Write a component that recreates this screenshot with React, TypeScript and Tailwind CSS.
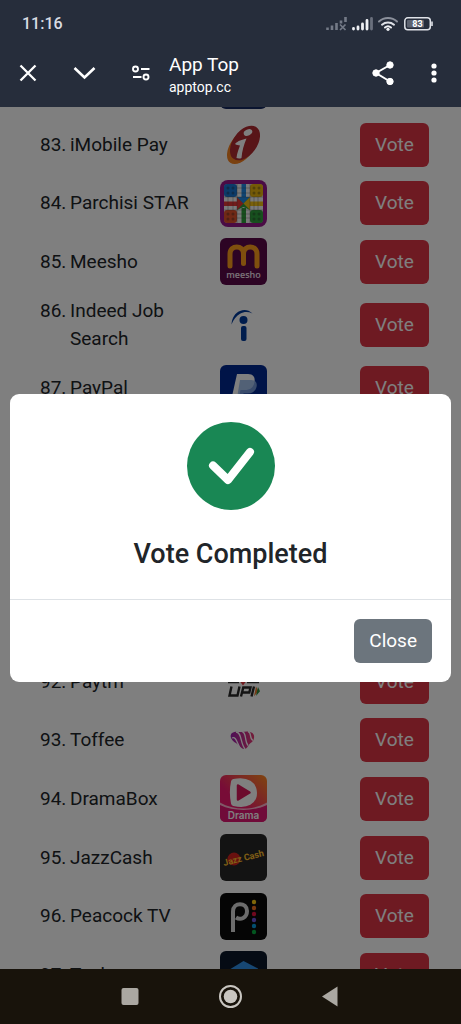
import React from 'react';

const UpiLogo = () => (
  <svg viewBox="0 0 47 47" className="size-[47px]">
    <path d="M8 24.500h11M27 24.500h12" stroke="#333" strokeWidth="1.500" />
    <path d="M20 23.500h6l-3 4z" fill="#e0343c" />
    <path
      d="M11.500 28.500l-2 9h8l2-9M21 38.500l2.300-9h7.200l-1.200 5h-7.300M34 28.500l-2.500 10"
      fill="none"
      stroke="#282828"
      strokeWidth="2.400"
    />
    <path d="M36 28.500l2.500 4.800-4.500 5z" fill="#e8762c" />
    <path d="M38 29l2 4.300-4 4.700z" fill="#2b8a3e" />
  </svg>
);

const IMobileLogo = () => (
  <svg viewBox="0 0 47 47" className="size-[47px]">
    <ellipse cx="22" cy="25.500" rx="11.500" ry="20" transform="rotate(36 22 25.500)" fill="#f58220" />
    <ellipse cx="25" cy="22" rx="12" ry="19.500" transform="rotate(36 25 22)" fill="#b02a30" />
    <path d="M15 23c3-3.500 7-4 11.500-5.500-2.500 6-4.500 12-5 19.500-2 .8-3.500.5-5 0 .5-5 2-8.500 3.500-12.500-1.800-.3-3.300-.3-5-1.500z" fill="#fff" />
    <ellipse cx="28" cy="11.500" rx="4.500" ry="3" transform="rotate(-25 28 11.500)" fill="#fff" />
  </svg>
);

const ParchisiLogo = () => (
  <svg viewBox="0 0 47 47" className="size-[47px]">
    <rect width="47" height="47" rx="8" fill="#94188a" />
    <rect x="4" y="4" width="39" height="39" rx="4" fill="#f4f4f4" />
    <rect x="4" y="4" width="13" height="13" rx="3" fill="#1976d2" />
    <rect x="30" y="4" width="13" height="13" rx="3" fill="#e8b50f" />
    <rect x="4" y="30" width="13" height="13" rx="3" fill="#e0522d" />
    <rect x="30" y="30" width="13" height="13" rx="3" fill="#2e9e3c" />
    <path d="M21.500 4h4.500v15h-4.500z" fill="#1e88e5" />
    <path d="M21.500 28h4.500v15h-4.500z" fill="#2e9e3c" />
    <path d="M4 21.500h15v4.500H4z" fill="#e53935" />
    <path d="M28 21.500h15v4.500H28z" fill="#f2c014" />
    <path d="M17 17l6.500 3 6.500-3-3 6.500 3 6.500-6.500-3-6.500 3 3-6.500z" fill="#2e9e3c" />
    <path d="M17 17l6.500 6.500L17 30z" fill="#e53935" />
    <path d="M17 17l6.500 6.500L30 17z" fill="#1e88e5" />
    <path d="M30 17l-6.500 6.500L30 30z" fill="#f2c014" />
    <path
      d="M17 4v39M30 4v39M4 17h39M4 30h39M17 8h13M17 13h13M17 34h13M17 38h13M8 17v13M13 17v13M34 17v13M38 17v13"
      stroke="#444"
      strokeOpacity=".5"
      strokeWidth=".7"
    />
    <g fill="#222" fillOpacity=".35">
      <circle cx="8" cy="8" r="1.500" />
      <circle cx="13" cy="8" r="1.500" />
      <circle cx="8" cy="13" r="1.500" />
      <circle cx="13" cy="13" r="1.500" />
      <circle cx="34" cy="8" r="1.500" />
      <circle cx="39" cy="8" r="1.500" />
      <circle cx="34" cy="13" r="1.500" />
      <circle cx="39" cy="13" r="1.500" />
      <circle cx="8" cy="34" r="1.500" />
      <circle cx="13" cy="34" r="1.500" />
      <circle cx="8" cy="39" r="1.500" />
      <circle cx="13" cy="39" r="1.500" />
      <circle cx="34" cy="34" r="1.500" />
      <circle cx="39" cy="34" r="1.500" />
      <circle cx="34" cy="39" r="1.500" />
      <circle cx="39" cy="39" r="1.500" />
    </g>
  </svg>
);

const MeeshoLogo = () => (
  <svg viewBox="0 0 47 47" className="size-[47px]">
    <rect width="47" height="47" rx="6" fill="#5a0848" />
    <path
      d="M10 28V16c0-9.500 13.500-9.500 13.500 0v9.500M23.500 16c0-9.500 13.500-9.500 13.500 0v12"
      fill="none"
      stroke="#ff9f1c"
      strokeWidth="5"
      strokeLinecap="round"
    />
    <text x="23.500" y="40" textAnchor="middle" fontSize="9" fontWeight="600" fill="#f5e6f1" fontFamily="Open Sans, sans-serif">
      meesho
    </text>
  </svg>
);

const IndeedLogo = () => (
  <svg viewBox="0 0 47 47" className="size-[47px]">
    <path d="M11.500 22.500c.5-7 3.500-11.500 8.500-13.500 4.500-1.800 8.500-1 12.500 2.500-4.500-2-8.500-1.800-12.500.2-4 2.300-6.500 5.800-8.500 10.800z" fill="#003a9b" />
    <circle cx="23.500" cy="18" r="4" fill="#003a9b" />
    <rect x="21" y="24" width="5.500" height="15" rx="2" fill="#003a9b" />
  </svg>
);

const PaypalLogo = () => (
  <svg viewBox="0 0 47 47" className="size-[47px]">
    <rect width="47" height="47" rx="6" fill="#002991" />
    <path d="M17 9h11c5 0 7.500 3 6.500 8-1 5.500-4 8-10 8h-4l-3 13h-7z" fill="#fff" />
    <path d="M20 15h11c4.500 0 6.500 3 5.500 7s-4 6.500-9 6.500h-4L22 39h-6z" fill="#8fb3e8" fillOpacity=".8" />
  </svg>
);

const ToffeeLogo = () => (
  <svg viewBox="0 0 47 47" className="size-[47px]">
    <defs>
      <linearGradient id="toffee" x1="0" x2="1">
        <stop stopColor="#9b1fae" />
        <stop offset="1" stopColor="#ea3a72" />
      </linearGradient>
    </defs>
    <path
      d="M12 16c3-2 6-1 9-1s6-1 9 0c4 1 5 4 3.500 8-1 2-2.500 2.500-4 4-1.500 1.700-2.500 5-5 5s-4-2-6-4c-3-2.500-6-3.500-7.500-7-.6-2-.5-4 1-5z"
      fill="url(#toffee)"
    />
    <path
      d="M12 21c4-2 5 5 8 10M16 15c6 0 4 11 9 17M22 14.500c5 1 2 9 6 14M28 14.500c4 1 1 7 5 9"
      fill="none"
      stroke="#fff"
      strokeWidth="1.300"
    />
  </svg>
);

const DramaLogo = () => (
  <svg viewBox="0 0 47 47" className="size-[47px]">
    <defs>
      <linearGradient id="drama" x1="0" y1="1" x2="1" y2="0">
        <stop offset=".4" stopColor="#f0196e" />
        <stop offset="1" stopColor="#ff8a1f" />
      </linearGradient>
    </defs>
    <rect width="47" height="47" rx="6" fill="url(#drama)" />
    <path d="M0 30c14 6 33 6 47 0v11q0 6-6 6H6q-6 0-6-6z" fill="#e01672" />
    <path d="M0 27.500c14 8 33 8 47 0v2.500c-14 6.500-33 6.500-47 0z" fill="#ffb3cf" />
    <path
      d="M14 7c13-3 20 3 20 11s-7 13-20 10c-1.500-7-1.500-14 0-21z"
      fill="#fff"
      stroke="#fff"
      strokeWidth="6"
      strokeLinejoin="round"
    />
    <path d="M18 10.500l11.500 7L18 24.500z" fill="#d8175b" stroke="#d8175b" strokeWidth="2.500" strokeLinejoin="round" />
    <text x="23.500" y="43.500" textAnchor="middle" fontSize="10" fontWeight="600" fill="#fff" fontFamily="Inter, sans-serif">
      Drama
    </text>
  </svg>
);

const JazzCashLogo = () => (
  <svg viewBox="0 0 47 47" className="size-[47px]">
    <rect width="47" height="47" rx="6" fill="#262626" />
    <circle cx="14" cy="25" r="6.500" fill="#d3231f" />
    <text
      x="23.500"
      y="27"
      textAnchor="middle"
      fontSize="9"
      fontWeight="700"
      fill="#ffbf2b"
      fontFamily="Roboto, sans-serif"
      transform="rotate(-14 23.500 24)"
    >
      Jazz Cash
    </text>
  </svg>
);

const PeacockLogo = () => {
  const feathers = ['#fccc12', '#f37021', '#e0103c', '#6e55dc', '#069de0', '#05ac3f'];
  return (
    <svg viewBox="0 0 47 47" className="size-[47px]">
      <rect width="47" height="47" rx="6" fill="#0a0a0a" />
      <path d="M13 39V18.500c0-10 14-9.500 14-.5 0 7-6.500 9.500-11 6.500" fill="none" stroke="#d8d8d8" strokeWidth="4" />
      {feathers.map((color, i) => (
        <circle key={color} cx="34" cy={9 + i * 6} r="2.200" fill={color} />
      ))}
    </svg>
  );
};

const TaskerLogo = () => (
  <svg viewBox="0 0 47 47" className="size-[47px]">
    <rect width="47" height="47" rx="6" fill="#0a1628" />
    <path d="M8 19.500L23.500 10 38 17.500v14L23.500 40 8 32z" fill="#2e8fe6" />
  </svg>
);

const BlueLogo = () => (
  <svg viewBox="0 0 47 47" className="size-[47px]">
    <rect width="47" height="47" rx="6" fill="#14285f" />
  </svg>
);

const apps = [
  { rank: 82, name: '', logo: BlueLogo },
  { rank: 83, name: 'iMobile Pay', logo: IMobileLogo },
  { rank: 84, name: 'Parchisi STAR', logo: ParchisiLogo },
  { rank: 85, name: 'Meesho', logo: MeeshoLogo },
  { rank: 86, name: 'Indeed Job Search', logo: IndeedLogo },
  { rank: 87, name: 'PayPal', logo: PaypalLogo },
  { rank: 88, name: '', logo: BlueLogo },
  { rank: 89, name: '', logo: BlueLogo },
  { rank: 90, name: '', logo: BlueLogo },
  { rank: 91, name: '', logo: BlueLogo },
  { rank: 92, name: 'Paytm', logo: UpiLogo },
  { rank: 93, name: 'Toffee', logo: ToffeeLogo },
  { rank: 94, name: 'DramaBox', logo: DramaLogo },
  { rank: 95, name: 'JazzCash', logo: JazzCashLogo },
  { rank: 96, name: 'Peacock TV', logo: PeacockLogo },
  { rank: 97, name: 'Tasker', logo: TaskerLogo }
];

function StatusIcons() {
  return (
    <svg viewBox="0 0 108 16" className="h-4 w-[108px]" aria-hidden="true">
      <g stroke="#747a87" strokeWidth="2.600">
        <path d="M2.500 14v-2.500M7 14v-4.500M11.500 14V7M16 7.500V4.500M20.500 6V1" />
        <path d="M15 8.500l5.500 5.500M20.500 8.500L15 14" strokeWidth="1.700" />
      </g>
      <g stroke="#eef0f4" strokeWidth="2.800" strokeLinecap="round">
        <path d="M28.500 13v-.5M33 13v-2M37.500 13V8M42 13V4.500" />
        <path d="M46.500 13V2.500" stroke="#6a707d" />
      </g>
      <g fill="none" strokeWidth="2" strokeLinecap="round">
        <path d="M54 5.500c5-4.700 13-4.700 18 0" stroke="#8b909b" />
        <path d="M57 8.700c3.500-3 8.500-3 12 0" stroke="#dfe2e8" />
        <path d="M60 11.500c1.800-1.500 4.200-1.500 6 0" stroke="#eef0f4" />
      </g>
      <circle cx="63" cy="13.300" r="1.600" fill="#eef0f4" />
      <rect x="79.800" y="1.800" width="25.500" height="12" rx="3" fill="none" stroke="#dfe2e8" strokeWidth="1.500" />
      <rect x="82" y="4" width="17" height="7.600" rx="1" fill="#5d6370" />
      <path d="M107 5.500v4.500" stroke="#dfe2e8" strokeWidth="1.600" />
      <text x="92.500" y="11" textAnchor="middle" fontSize="9" fontWeight="700" fill="#fff" fontFamily="Roboto, sans-serif">
        83
      </text>
    </svg>
  );
}

function Header() {
  return (
    <header className="bg-[#262d3b] text-white">
      <div className="flex h-12 items-center justify-between pl-[22px] pr-7">
        <span className="text-base font-medium text-[#d9dce3]">11:16</span>
        <StatusIcons />
      </div>
      <div className="flex h-[59px] items-center pb-[10px] pl-4 pr-[15px]">
        <button aria-label="Close page" className="flex size-6 items-center justify-center">
          <svg viewBox="0 0 24 24" className="size-6" fill="none" stroke="currentColor" strokeWidth="2.300">
            <path d="M4.500 4.500l15 15M19.500 4.500l-15 15" />
          </svg>
        </button>
        <button aria-label="Minimize" className="ml-8 flex size-6 items-center justify-center">
          <svg viewBox="0 0 24 24" className="size-6 overflow-visible" fill="none" stroke="currentColor" strokeWidth="2.600">
            <path d="M2.500 7l10 9.500L22.500 7" />
          </svg>
        </button>
        <button aria-label="Site settings" className="ml-8 flex size-6 items-center justify-center">
          <svg viewBox="0 0 24 24" className="size-6" fill="none" stroke="currentColor" strokeWidth="1.900">
            <circle cx="7.500" cy="8" r="2.500" />
            <path d="M13 8h8.500M5 16h8.500" />
            <circle cx="18" cy="16" r="2.500" />
          </svg>
        </button>
        <div className="ml-[17px] min-w-0 flex-1 pt-1">
          <h1 className="text-[19px] leading-6">App Top</h1>
          <p className="text-sm leading-5">apptop.cc</p>
        </div>
        <button aria-label="Share" className="flex size-6 items-center justify-center">
          <svg viewBox="0 0 24 24" className="size-6 overflow-visible" fill="currentColor" stroke="currentColor">
            <path d="M20 4L6 12l14 8.500" fill="none" strokeWidth="2" />
            <circle cx="20" cy="4" r="3.200" />
            <circle cx="6" cy="12" r="3.200" />
            <circle cx="20" cy="20.500" r="3.200" />
          </svg>
        </button>
        <button aria-label="More options" className="ml-7 flex size-6 items-center justify-center">
          <svg viewBox="0 0 24 24" className="size-6" fill="currentColor">
            <circle cx="12" cy="5" r="2.600" />
            <circle cx="12" cy="12" r="2.600" />
            <circle cx="12" cy="19" r="2.600" />
          </svg>
        </button>
      </div>
    </header>
  );
}

function VoteModal() {
  return (
    <div className="absolute inset-0 flex items-center justify-center bg-black/50 px-[10px]">
      <div role="dialog" aria-labelledby="vote-title" className="w-full max-w-xl rounded-[9px] bg-white text-[#212529]">
        <div className="flex flex-col items-center pb-[29px] pt-7">
          <svg viewBox="0 0 88 88" className="size-[88px]" aria-hidden="true">
            <circle cx="44" cy="44" r="44" fill="#198754" />
            <path
              d="M26 43.500L41 58l22-28"
              fill="none"
              stroke="#fff"
              strokeWidth="8"
              strokeLinecap="round"
              strokeLinejoin="round"
            />
          </svg>
          <h2 id="vote-title" className="mt-7 text-[27px] font-medium leading-8">
            Vote Completed
          </h2>
        </div>
        <div className="flex justify-end border-t border-[#dee2e6] p-[19px]">
          <button className="h-11 rounded-md bg-[#6c757d] px-[15px] text-[19px] text-white">Close</button>
        </div>
      </div>
    </div>
  );
}

export default function App() {
  return (
    <div className="flex h-screen flex-col font-[Roboto,sans-serif]">
      <Header />
      <main className="relative flex-1 overflow-hidden bg-white">
        <ol className="-mt-[51px] pl-10 pr-8 text-[19px] leading-7 text-[#212529]">
          {apps.map(({ rank, name, logo: Logo }) => (
            <li
              key={rank}
              className="grid min-h-[59px] grid-cols-[1fr_140px_69px] items-center py-[6px] nth-[3n]:min-h-[58px] nth-[3n]:py-[5px]"
            >
              <div className="flex">
                {name && <span className="w-[30px] shrink-0">{rank}.</span>}
                <span>{name}</span>
              </div>
              <Logo />
              {name && <button className="h-11 rounded-md bg-[#dc3545] text-white">Vote</button>}
            </li>
          ))}
        </ol>
        <VoteModal />
      </main>
      <nav className="flex h-[55px] items-center justify-center bg-[#18130b] text-[#aba8a2]">
        <button aria-label="Recent apps" className="flex w-[100px] justify-center">
          <svg viewBox="0 0 24 24" className="size-6" fill="currentColor">
            <rect x="2.500" y="3" width="17" height="17" rx="2" />
          </svg>
        </button>
        <button aria-label="Home" className="flex w-[100px] justify-center">
          <svg viewBox="0 0 24 24" className="size-6">
            <circle cx="11.500" cy="11.500" r="10.500" fill="none" stroke="#c9c6c1" strokeWidth="2" />
            <circle cx="11.500" cy="11.500" r="6.800" fill="#c9c6c1" />
          </svg>
        </button>
        <button aria-label="Back" className="flex w-[100px] justify-center">
          <svg viewBox="0 0 24 24" className="size-6" fill="currentColor">
            <path d="M3 11.500l15.500-10v20z" />
          </svg>
        </button>
      </nav>
    </div>
  );
}
